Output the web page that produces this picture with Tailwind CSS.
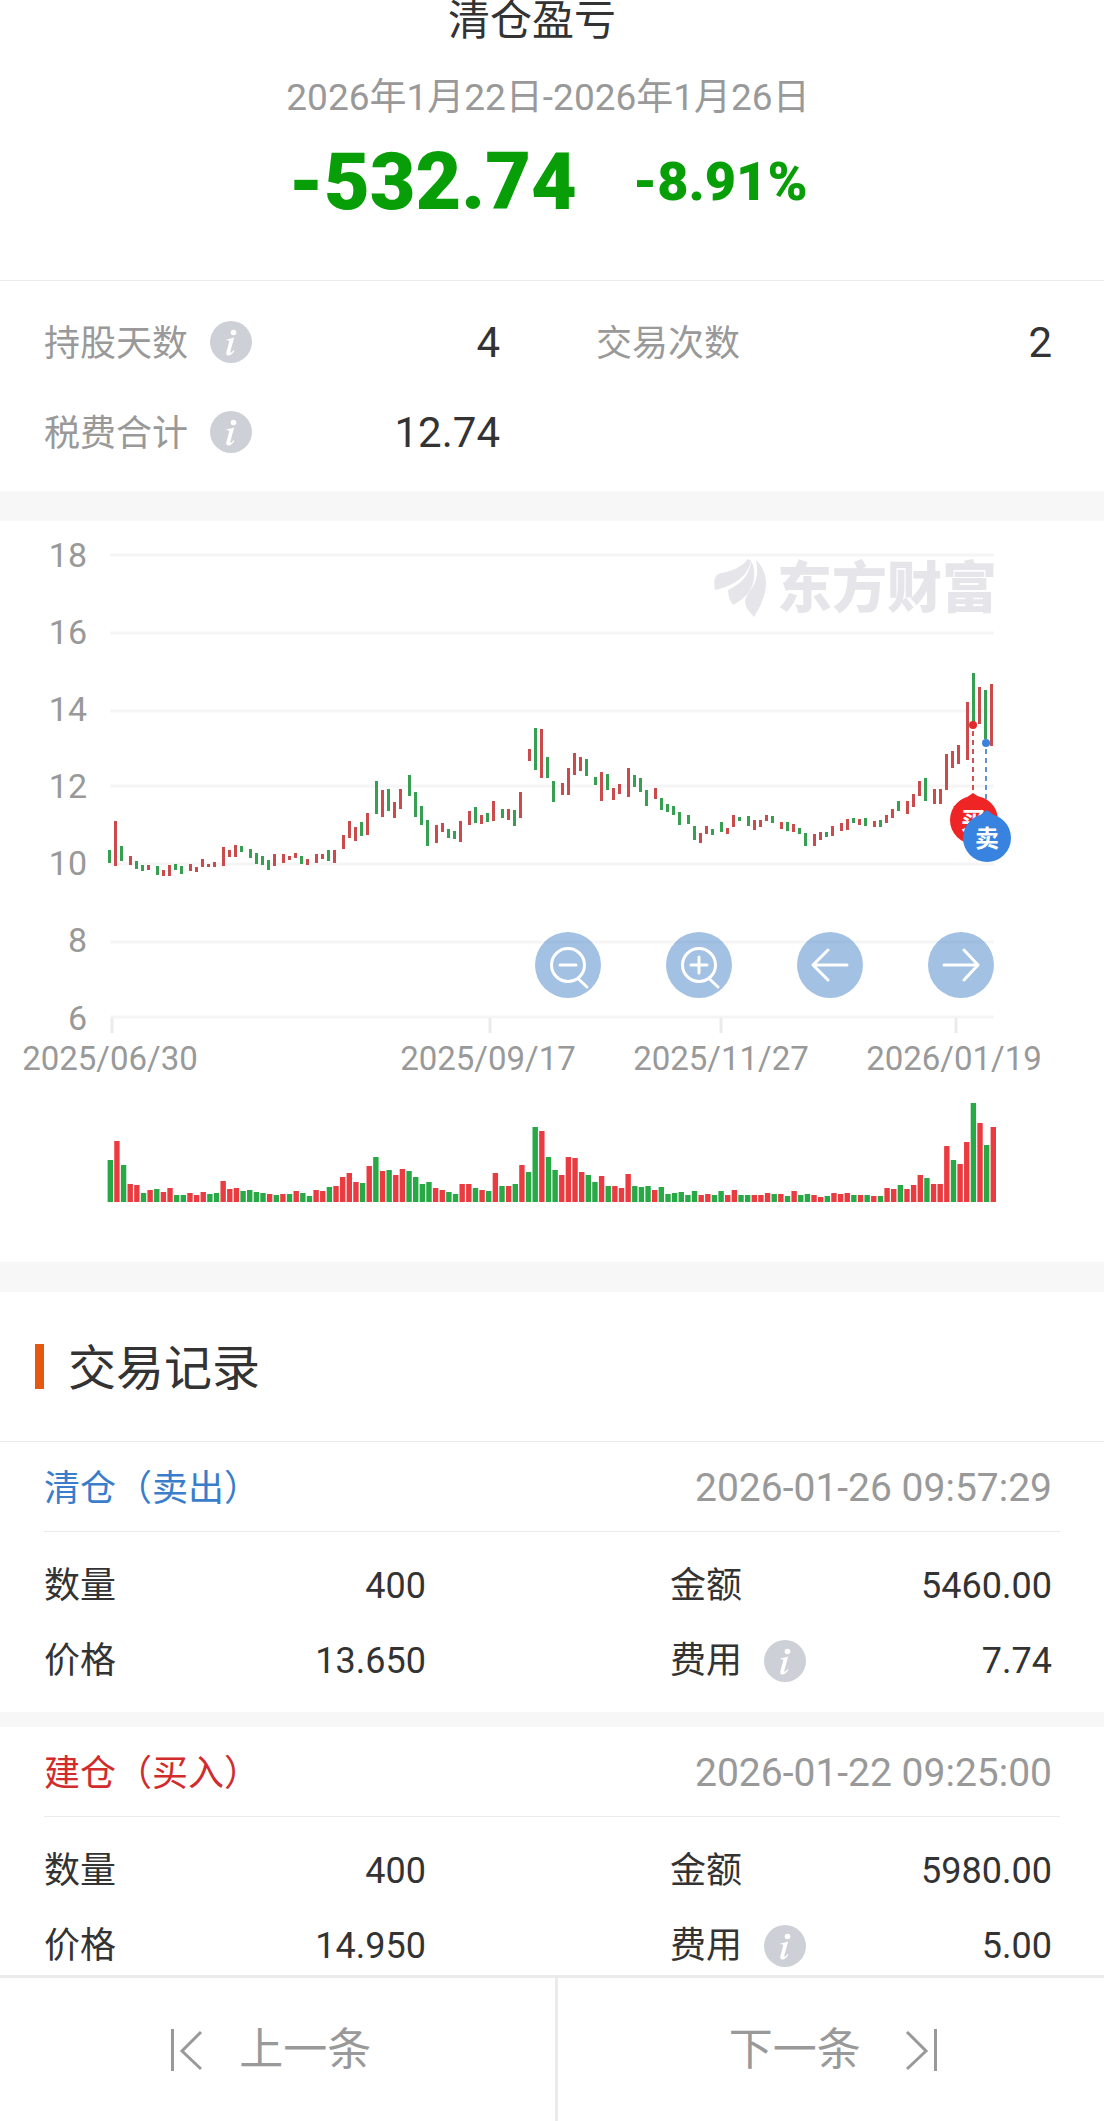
<!DOCTYPE html>
<html lang="zh-CN">
    <head>
        <meta charset="UTF-8" />
        <meta name="viewport" content="width=device-width, initial-scale=1.0" />
        <title>清仓盈亏</title>
        <script src="https://cdn.jsdelivr.net/npm/@tailwindcss/browser@4"></script>
        <style>
            body {
                font-family: Roboto, "Noto Sans CJK SC", sans-serif;
            }
        </style>
    </head>
    <body class="bg-white text-[#333333] h-screen flex flex-col overflow-hidden">
        <!-- Shared info icon -->
        <svg class="hidden">
            <symbol id="icon-info" viewBox="0 0 42 42">
                <circle cx="21" cy="21" r="21" fill="#cdd0d6" />
                <circle cx="23.5" cy="11.5" r="2.8" fill="#fff" />
                <path
                    d="M16.5 18.5C19 18 20.5 17.6 24.2 16.6L20.4 30.2C20 31.8 20.8 32 21.6 31.3C22.4 30.6 23 29.9 23.6 29L24.5 29.7C22.6 32.8 20.6 34.6 18.4 34.6C16.5 34.6 15.8 33.1 16.4 31L19.2 21C19.6 19.6 19 19.2 16.3 19.3Z"
                    fill="#fff"
                />
            </symbol>
        </svg>

        <main class="flex-1 min-h-0 overflow-y-auto [scrollbar-width:none]">
            <!-- Summary -->
            <header class="h-[281px] border-b border-[#ebebeb] flex flex-col items-center pr-2">
                <h1 class="text-[42px] leading-[42px] pr-8">清仓盈亏</h1>
                <p class="mt-[30px] text-[37px] leading-[52px] text-[#999999]">
                    2026年1月22日-2026年1月26日
                </p>
                <div class="mt-[14px] flex items-center gap-14 font-bold text-[#089e08]">
                    <strong class="text-[79px] leading-[88px]">-532.74</strong>
                    <strong class="text-[54px] leading-[88px]">-8.91%</strong>
                </div>
            </header>

            <section class="grid grid-cols-2 gap-x-24 pt-4 pb-[14px] pl-11 pr-[52px]">
                <div class="flex items-center h-[90px]">
                    <span class="pt-1 text-[36px] text-[#999999]">持股天数</span>
                    <button type="button" aria-label="持股天数说明" class="ml-[22px]">
                        <svg class="size-[42px]"><use href="#icon-info" /></svg>
                    </button>
                    <span class="ml-auto text-[42px]">4</span>
                </div>
                <div class="flex items-center h-[90px]">
                    <span class="pt-1 text-[36px] text-[#999999]">交易次数</span>
                    <span class="ml-auto text-[42px]">2</span>
                </div>
                <div class="flex items-center h-[90px]">
                    <span class="pt-1 text-[36px] text-[#999999]">税费合计</span>
                    <button type="button" aria-label="税费合计说明" class="ml-[22px]">
                        <svg class="size-[42px]"><use href="#icon-info" /></svg>
                    </button>
                    <span class="ml-auto text-[42px]">12.74</span>
                </div>
            </section>

            <div class="h-[30px] bg-[#f7f7f7]"></div>

            <!-- Price and volume chart -->
            <section class="relative">
                <svg id="chart" viewBox="0 521 1104 741" class="block w-full h-auto">
                    <g id="grid" stroke="#f5f5f5" stroke-width="3"></g>
                    <g stroke="#ebebeb" stroke-width="3">
                        <path d="M112 1018v15M490 1018v15M721 1018v15M956 1018v15" />
                    </g>
                    <g id="y-labels" fill="#999999" font-size="34" text-anchor="end"></g>
                    <g fill="#999999" font-size="33" text-anchor="middle">
                        <text x="110" y="1070">2025/06/30</text>
                        <text x="488" y="1070">2025/09/17</text>
                        <text x="721" y="1070">2025/11/27</text>
                        <text x="954" y="1070">2026/01/19</text>
                    </g>
                    <!-- Watermark -->
                    <g fill="#e6e6ea">
                        <path d="M748 559C741 568 731 571 722 573C715 574 713 579 715 590C728 587 747 580 751 561Z" />
                        <path d="M751.5 562C748 578 740 584 728 590C728 596 730 601 733 605C748 597 756 586 754 570C753.500 566 753 564 751.500 562Z" />
                        <path d="M756 560C759 574 756 584 749 592C744 599 744 604 748 610L754 617C761 606 766 594 766 583C766 573 761 564 756 560Z" />
                        <text x="777" y="607" font-size="55" font-weight="900">东方财富</text>
                    </g>
                    <g id="candles"></g>
                    <g id="volumes"></g>
                    <!-- Buy and sell markers -->
                    <path d="M973 731V794" stroke="#d05050" stroke-width="2" stroke-dasharray="5 4" />
                    <path d="M986 749V812" stroke="#5e93cf" stroke-width="2" stroke-dasharray="5 4" />
                    <circle cx="973" cy="725" r="4" fill="#e22b2b" />
                    <circle cx="986" cy="743" r="4" fill="#3b82dc" />
                    <g fill="#ef2424">
                        <circle cx="974" cy="820" r="24" />
                        <path d="M973 793L994 807H953Z" />
                        <text x="973" y="829" font-size="24" font-weight="700" text-anchor="middle" fill="#fff">买</text>
                    </g>
                    <g fill="#3883e0">
                        <circle cx="987" cy="838" r="24" />
                        <path d="M987 810L1007 825H967Z" />
                        <text x="987" y="847" font-size="24" font-weight="700" text-anchor="middle" fill="#fff">卖</text>
                    </g>
                </svg>
                <div class="absolute top-[55.5%] right-[10%] flex gap-[65px]">
                    <button type="button" aria-label="缩小" class="size-[66px] rounded-full bg-[#4884c8]/50">
                        <svg viewBox="0 0 66 66" fill="none" stroke="#fff" stroke-width="3" stroke-linecap="round">
                            <circle cx="33" cy="33" r="16.5" />
                            <path d="M25 33H41M43.5 47L52 55" />
                        </svg>
                    </button>
                    <button type="button" aria-label="放大" class="size-[66px] rounded-full bg-[#4884c8]/50">
                        <svg viewBox="0 0 66 66" fill="none" stroke="#fff" stroke-width="3" stroke-linecap="round">
                            <circle cx="33" cy="33" r="16.5" />
                            <path d="M25 33H41M33 25V41M43.5 47L52 55" />
                        </svg>
                    </button>
                    <button type="button" aria-label="左移" class="size-[66px] rounded-full bg-[#4884c8]/50">
                        <svg viewBox="0 0 66 66" fill="none" stroke="#fff" stroke-width="3" stroke-linecap="round" stroke-linejoin="round">
                            <path d="M50 33H16M31 18L16 33L31 48" />
                        </svg>
                    </button>
                    <button type="button" aria-label="右移" class="size-[66px] rounded-full bg-[#4884c8]/50">
                        <svg viewBox="0 0 66 66" fill="none" stroke="#fff" stroke-width="3" stroke-linecap="round" stroke-linejoin="round">
                            <path d="M16 33H50M36 18L50 33L36 48" />
                        </svg>
                    </button>
                </div>
            </section>

            <div class="h-[30px] bg-[#f7f7f7]"></div>

            <!-- Trade records -->
            <section>
                <div class="flex items-center gap-6 h-[150px] pl-[35px] border-b border-[#ebebeb]">
                    <span class="w-[9px] h-[45px] bg-[#e4580f]"></span>
                    <h2 class="pt-1 text-[48px] leading-[60px]">交易记录</h2>
                </div>

                <article>
                    <div class="mx-11 pt-1 pr-2 h-[90px] flex items-center justify-between border-b border-[#ebebeb]">
                        <h3 class="text-[36px] text-[#3a7dcb]">清仓（卖出）</h3>
                        <time class="text-[39px] text-[#999999]">2026-01-26 09:57:29</time>
                    </div>
                    <dl class="grid grid-cols-2 gap-x-[244px] pt-4 pb-[14px] pl-11 pr-[52px] text-[36px]">
                        <div class="flex items-center h-[75px]">
                            <dt>数量</dt>
                            <dd class="ml-auto">400</dd>
                        </div>
                        <div class="flex items-center h-[75px]">
                            <dt>金额</dt>
                            <dd class="ml-auto">5460.00</dd>
                        </div>
                        <div class="flex items-center h-[75px]">
                            <dt>价格</dt>
                            <dd class="ml-auto">13.650</dd>
                        </div>
                        <div class="flex items-center h-[75px]">
                            <dt class="flex items-center gap-[22px]">
                                费用
                                <button type="button" aria-label="费用说明">
                                    <svg class="size-[42px]"><use href="#icon-info" /></svg>
                                </button>
                            </dt>
                            <dd class="ml-auto">7.74</dd>
                        </div>
                    </dl>
                </article>

                <div class="h-[15px] bg-[#f7f7f7]"></div>

                <article>
                    <div class="mx-11 pt-1 pr-2 h-[90px] flex items-center justify-between border-b border-[#ebebeb]">
                        <h3 class="text-[36px] text-[#d12b2b]">建仓（买入）</h3>
                        <time class="text-[39px] text-[#999999]">2026-01-22 09:25:00</time>
                    </div>
                    <dl class="grid grid-cols-2 gap-x-[244px] pt-4 pb-[14px] pl-11 pr-[52px] text-[36px]">
                        <div class="flex items-center h-[75px]">
                            <dt>数量</dt>
                            <dd class="ml-auto">400</dd>
                        </div>
                        <div class="flex items-center h-[75px]">
                            <dt>金额</dt>
                            <dd class="ml-auto">5980.00</dd>
                        </div>
                        <div class="flex items-center h-[75px]">
                            <dt>价格</dt>
                            <dd class="ml-auto">14.950</dd>
                        </div>
                        <div class="flex items-center h-[75px]">
                            <dt class="flex items-center gap-[22px]">
                                费用
                                <button type="button" aria-label="费用说明">
                                    <svg class="size-[42px]"><use href="#icon-info" /></svg>
                                </button>
                            </dt>
                            <dd class="ml-auto">5.00</dd>
                        </div>
                    </dl>
                </article>
            </section>
        </main>

        <!-- Previous / next -->
        <nav class="flex h-[146px] border-t-3 border-[#ebebeb] text-[44px] text-[#999999]">
            <button type="button" class="flex-1 flex items-center justify-center gap-9 pr-3">
                <svg class="w-8 h-[42px]" viewBox="0 0 32 42" fill="none" stroke="currentColor" stroke-width="3">
                    <path d="M1.5 0V42M30 3L11 22L30 40" />
                </svg>
                上一条
            </button>
            <span class="w-[3px] bg-[#ebebeb]"></span>
            <button type="button" class="flex-1 flex items-center justify-center gap-11 pl-1">
                下一条
                <svg class="w-8 h-[42px]" viewBox="0 0 32 42" fill="none" stroke="currentColor" stroke-width="3">
                    <path d="M30.5 0V42M2 3L21 22L2 40" />
                </svg>
            </button>
        </nav>

        <script>
            const SVG_NS = "http://www.w3.org/2000/svg";

            function add(parentId, tag, attrs, text) {
                const el = document.createElementNS(SVG_NS, tag);
                for (const key in attrs) el.setAttribute(key, attrs[key]);
                if (text) el.textContent = text;
                document.getElementById(parentId).appendChild(el);
            }

            // Grid lines and price labels: [price, line y, label baseline]
            const levels = [
                ["18", 555, 567], ["16", 633, 644], ["14", 711, 721], ["12", 786, 798],
                ["10", 864, 875], ["8", 942, 952], ["6", 1017, 1030],
            ];
            levels.forEach(([price, line, base]) => {
                add("grid", "path", { d: `M110 ${line}H994` });
                add("y-labels", "text", { x: 87, y: base }, price);
            });

            // Daily range: colour, x, top, bottom
            const candles = `
                g109,850,863 r115,821,866 g121,846,861 r130,856,865 g136,861,869 g142,865,871 r148,865,870
                g157,866,875 r163,870,876 r169,865,876 g175,864,870 g181,866,874 r190,864,871 r196,867,872
                r202,859,867 r208,864,867 r214,862,867 r223,847,866 r229,850,857 r235,845,857 g241,846,852
                g250,849,858 g256,853,864 g262,856,865 g268,860,870 r274,854,866 r283,854,863 r289,856,860
                r295,853,858 g301,856,864 r307,859,865 r316,854,863 r322,854,859 g328,850,861 r334,850,863
                r343,835,849 r349,821,838 r355,827,841 g361,822,836 r367,813,835 g376,781,814 r382,790,817
                g388,789,811 r394,802,818 r400,789,809 g409,775,796 g415,792,817 g421,806,825 g427,820,846
                r436,825,843 r442,823,832 g448,829,838 g454,831,839 r460,821,842 r469,811,825 g475,807,823
                r481,815,824 g487,813,822 r493,801,821 g502,809,818 r508,809,820 g514,810,826 r520,792,818
                r529,749,761 g535,728,770 r541,729,778 g547,757,778 g553,781,802 r562,783,795 r568,768,795
                r574,753,775 r580,757,771 g586,759,776 g595,777,785 r601,772,801 g607,774,790 r613,788,800
                r619,784,794 r628,768,797 g634,775,787 g640,778,792 g646,790,806 r655,788,799 g661,798,810
                g667,804,812 g673,806,815 g679,812,825 g688,815,824 g694,826,840 r700,833,843 r706,826,834
                g712,829,835 g721,822,832 r727,828,834 r733,815,827 g739,817,821 g748,816,826 r754,820,830
                r760,820,827 r766,815,821 g772,816,823 r781,822,829 g787,822,831 r793,824,832 g799,828,834
                g805,833,846 r814,834,846 r820,832,840 g826,832,837 r832,826,836 r841,823,831 r847,819,830
                g853,818,823 r859,819,825 g865,818,826 r874,821,827 g880,820,827 r886,815,823 r892,809,818
                g898,801,811 r907,801,814 r913,794,807 r919,781,796 g925,778,801 r934,789,804 r940,789,804
                r946,754,790 r952,751,768 r958,745,764 r967,702,760 g973,673,722 r979,687,724 g985,690,739
                r991,684,746`;
            candles.trim().split(/\s+/).forEach((item) => {
                const [x, top, bottom] = item.slice(1).split(",").map(Number);
                add("candles", "rect", {
                    x: x - 1, y: top, width: 3, height: bottom - top,
                    fill: item[0] === "r" ? "#cb4a4b" : "#369f52",
                });
            });

            // Daily volume: colour and bar height
            const volumes = `
                g42 r61 g37 r18 r17 g9 r12 g13 r10 r14 g7 g7 r9 r7 r10 g8 g9 r21 r13 r14 g11 g12 g10 g9 r8 g7
                r8 g8 r11 g9 g6 r12 r11 g15 r16 r25 r29 r20 g19 r36 g45 r31 g32 r27 r33 g31 g25 g18 g20 r14
                r12 g10 g8 r18 r18 g14 r12 g11 r29 g16 r16 g18 r37 g30 g75 r71 g45 g32 r27 r45 r44 r30 g27
                g20 r26 g16 r16 r14 r28 g16 g15 g16 r12 g15 g8 g9 g10 g7 g11 r7 r8 g7 g11 r7 r12 g7 g7 r7 r7
                r9 g8 r8 g6 r11 g7 g8 r7 r5 g6 r9 r8 r9 g7 r7 g7 r6 g6 r14 r13 g17 r13 r17 r27 g24 r18 r18
                r56 g42 r38 r60 g99 r79 g57 r75`;
            const bars = volumes.trim().split(/\s+/);
            const pitch = 883 / (bars.length - 1);
            bars.forEach((item, i) => {
                const height = Number(item.slice(1));
                add("volumes", "rect", {
                    x: 107.6 + i * pitch, y: 1202 - height, width: 5.4, height,
                    fill: item[0] === "r" ? "#ea3b40" : "#27a946",
                });
            });
        </script>
    </body>
</html>
